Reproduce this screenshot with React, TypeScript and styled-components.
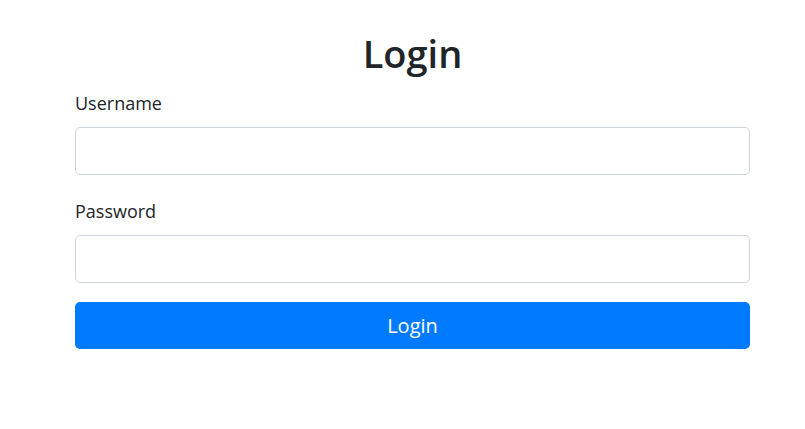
import styled, { createGlobalStyle } from "styled-components";

const GlobalStyle = createGlobalStyle`
  body {
    margin: 0;
    background: #ffffff;
    font-family: "Open Sans", "Noto Sans", sans-serif;
    color: #212529;
  }
`;

const Page = styled.div`
  padding: 29px 55px 0 75px;
`;

const Form = styled.form`
  display: flex;
  flex-direction: column;
  width: 675px;
`;

const Title = styled.h1`
  margin: 0 0 13px;
  font-size: 38px;
  line-height: 48px;
  font-weight: 600;
  text-align: center;
  color: #212529;
`;

const Group = styled.div`
  display: flex;
  flex-direction: column;
  margin-bottom: 23px;

  &:last-of-type {
    margin-bottom: 19px;
  }
`;

const Label = styled.label`
  font-size: 18px;
  line-height: 27px;
  margin-bottom: 10px;
  color: #212529;
`;

const Input = styled.input`
  box-sizing: border-box;
  height: 48px;
  width: 100%;
  padding: 8px 16px;
  font-size: 20px;
  font-family: inherit;
  border: 1px solid #ced4da;
  border-radius: 5px;
  outline: none;
  background: #fff;
`;

const Button = styled.button`
  box-sizing: border-box;
  height: 47px;
  width: 100%;
  border: none;
  border-radius: 5px;
  background: #007bff;
  color: #ffffff;
  font-family: inherit;
  font-size: 20px;
  cursor: pointer;
`;

export default function App() {
  return (
    <>
      <GlobalStyle />
      <Page>
        <Form onSubmit={(e) => e.preventDefault()}>
          <Title>Login</Title>
          <Group>
            <Label htmlFor="username">Username</Label>
            <Input id="username" type="text" />
          </Group>
          <Group>
            <Label htmlFor="password">Password</Label>
            <Input id="password" type="password" />
          </Group>
          <Button type="submit">Login</Button>
        </Form>
      </Page>
    </>
  );
}
